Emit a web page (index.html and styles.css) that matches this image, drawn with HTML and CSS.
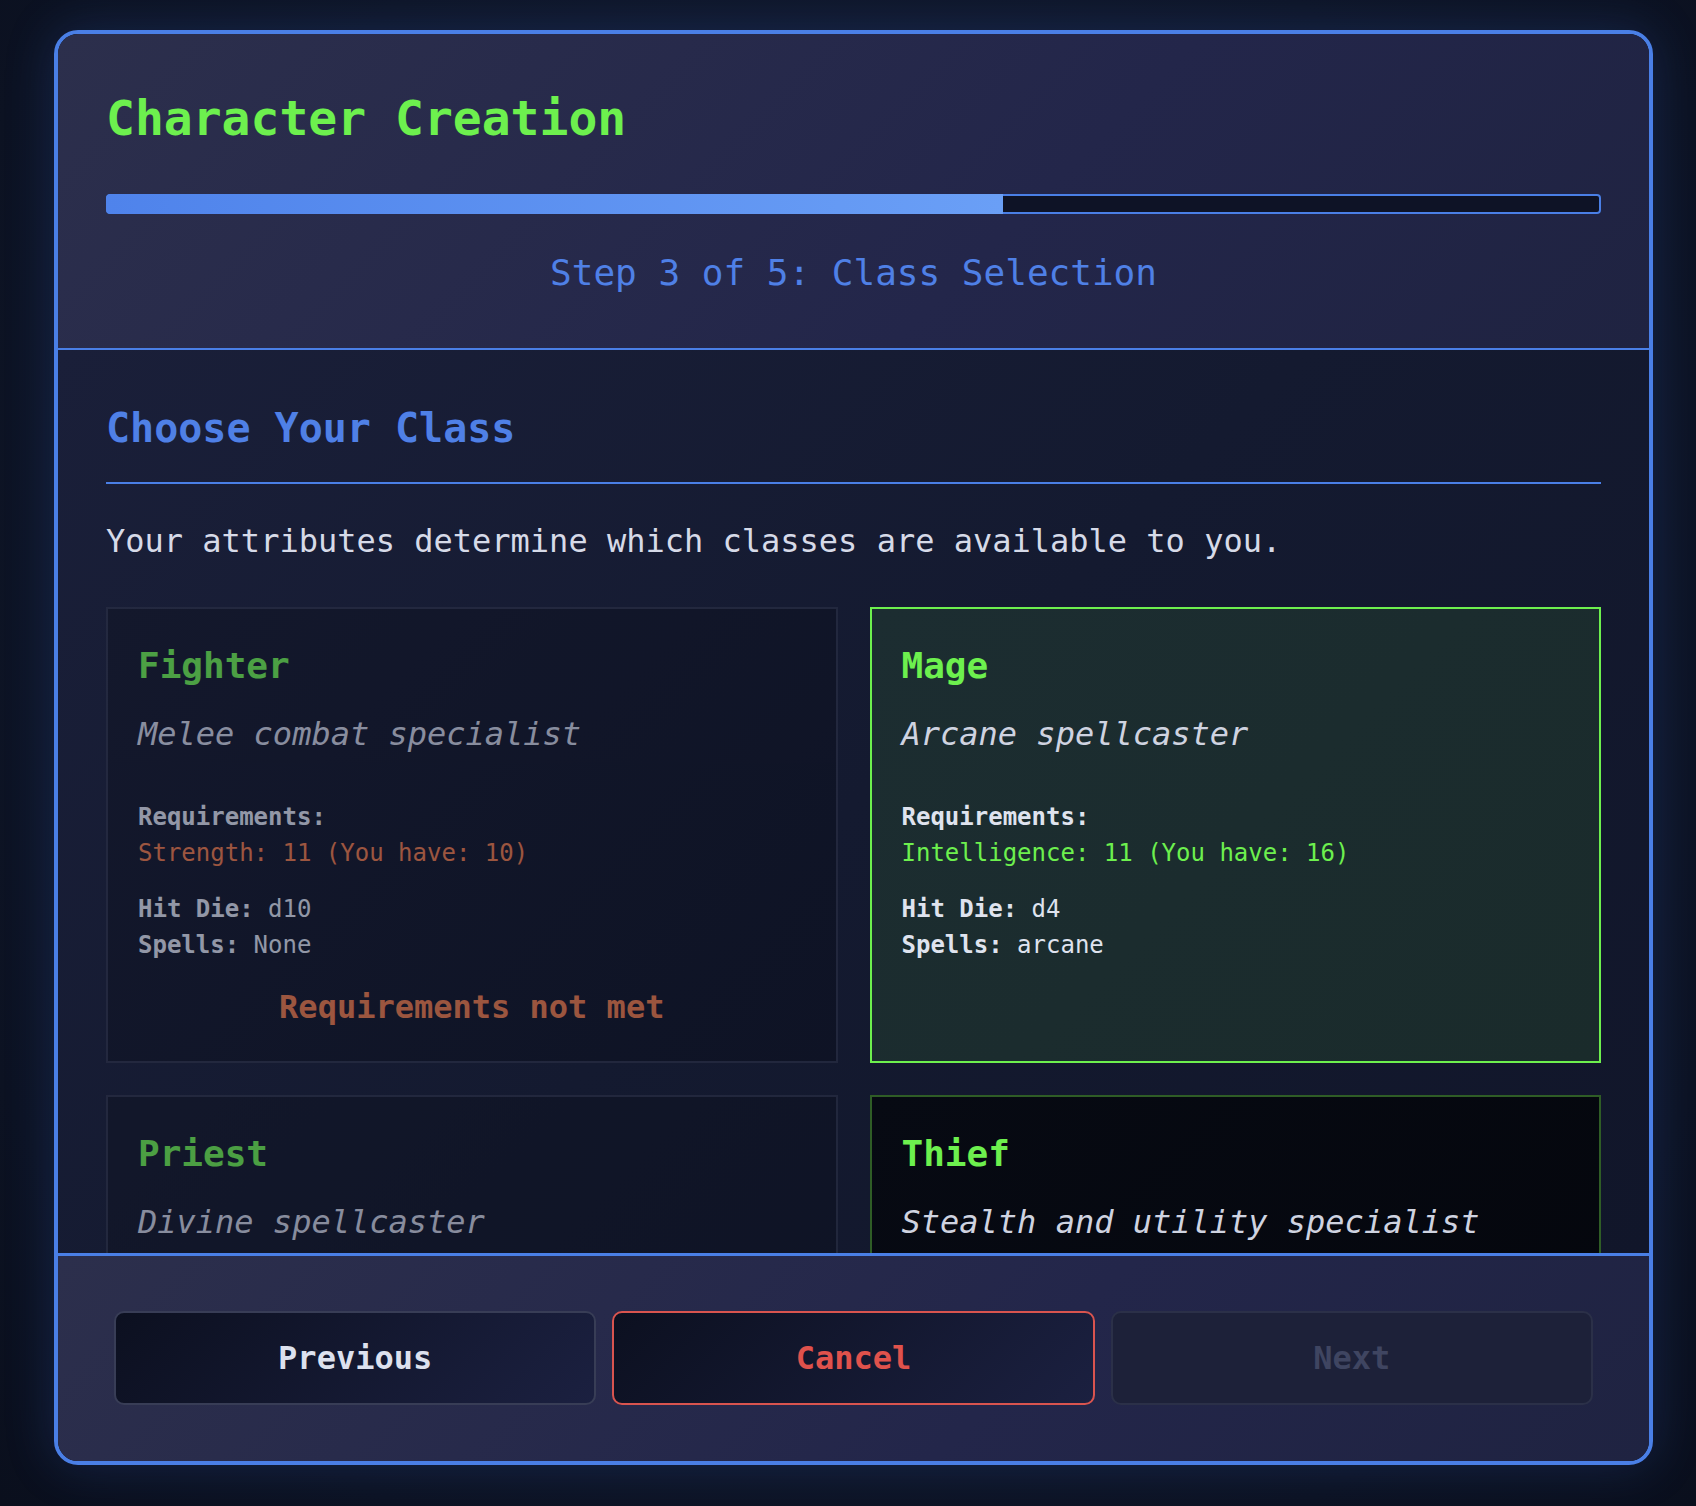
FILE: index.html
```html
<!DOCTYPE html>
<html lang="en">
<head>
<meta charset="utf-8">
<title>Character Creation</title>
<link rel="stylesheet" href="styles.css">
</head>
<body>
<div class="page">
  <div class="modal">
    <header class="modal-header">
      <h1 class="title">Character Creation</h1>
      <div class="progress"><div class="progress-fill" style="width:60%"></div></div>
      <p class="step">Step 3 of 5: Class Selection</p>
    </header>
    <main class="modal-body">
      <h2 class="section-title">Choose Your Class</h2>
      <p class="intro">Your attributes determine which classes are available to you.</p>
      <div class="class-grid">
        <div class="class-card unavailable">
          <h3 class="class-name">Fighter</h3>
          <p class="class-desc">Melee combat specialist</p>
          <div class="req-label">Requirements:</div>
          <div class="req-value fail">Strength: 11 (You have: 10)</div>
          <div class="stat"><b>Hit Die:</b> d10</div>
          <div class="stat"><b>Spells:</b> None</div>
          <div class="not-met">Requirements not met</div>
        </div>
        <div class="class-card selected">
          <h3 class="class-name">Mage</h3>
          <p class="class-desc">Arcane spellcaster</p>
          <div class="req-label">Requirements:</div>
          <div class="req-value ok">Intelligence: 11 (You have: 16)</div>
          <div class="stat"><b>Hit Die:</b> d4</div>
          <div class="stat"><b>Spells:</b> arcane</div>
        </div>
        <div class="class-card unavailable">
          <h3 class="class-name">Priest</h3>
          <p class="class-desc">Divine spellcaster</p>
          <div class="req-label">Requirements:</div>
          <div class="req-value fail">Wisdom: 11 (You have: 9)</div>
          <div class="stat"><b>Hit Die:</b> d8</div>
          <div class="stat"><b>Spells:</b> divine</div>
          <div class="not-met">Requirements not met</div>
        </div>
        <div class="class-card available">
          <h3 class="class-name">Thief</h3>
          <p class="class-desc">Stealth and utility specialist</p>
          <div class="req-label">Requirements:</div>
          <div class="req-value ok">Dexterity: 11 (You have: 14)</div>
          <div class="stat"><b>Hit Die:</b> d6</div>
          <div class="stat"><b>Spells:</b> None</div>
        </div>
      </div>
    </main>
    <footer class="modal-footer">
      <button class="btn btn-prev">Previous</button>
      <button class="btn btn-cancel">Cancel</button>
      <button class="btn btn-next" disabled>Next</button>
    </footer>
  </div>
</div>
</body>
</html>
```

FILE: styles.css
```css
html, body {
  margin: 0;
  padding: 0;
}

body {
  min-height: 1506px;
  background: radial-gradient(ellipse at 50% 40%, #131c34 0%, #0e1527 60%, #0a0f1d 100%);
  font-family: "DejaVu Sans Mono", "Liberation Mono", monospace;
  color: #d6dae8;
}

.page {
  padding: 30px 43px 41px 54px;
}

.modal {
  width: 1599px;
  height: 1435px;
  box-sizing: border-box;
  border: 4px solid #4a7fe6;
  border-radius: 24px;
  overflow: hidden;
  display: flex;
  flex-direction: column;
  box-shadow: 0 0 50px rgba(60, 110, 220, 0.22);
}

.modal-header {
  padding: 48px;
  background: linear-gradient(135deg, #2c2f4c 0%, #23264a 60%, #1f2341 100%);
  border-bottom: 2px solid #4a7fe6;
}

.title {
  margin: 0 0 40px;
  font-size: 48px;
  line-height: 72px;
  font-weight: bold;
  color: #6df04e;
}

.progress {
  height: 20px;
  border-radius: 4px;
  background: #0e1326;
  box-shadow: inset 0 0 0 2px #4a7fe6;
  overflow: hidden;
}

.progress-fill {
  height: 100%;
  border-radius: 4px 0 0 4px;
  background: linear-gradient(90deg, #4f83eb 0%, #6a9ff6 100%);
}

.step {
  margin: 32px 0 0;
  font-size: 36px;
  line-height: 54px;
  text-align: center;
  color: #4f80e6;
}

.modal-body {
  flex: 1;
  overflow: hidden;
  padding: 48px 48px 0;
  background: linear-gradient(135deg, #1a1f39 0%, #141a30 50%, #11162a 100%);
}

.section-title {
  margin: 0;
  padding-bottom: 24px;
  border-bottom: 2px solid #4a7fe6;
  font-size: 40px;
  line-height: 60px;
  font-weight: bold;
  color: #4f80e6;
}

.intro {
  margin: 33px 0 42px;
  font-size: 32px;
  line-height: 48px;
  color: #d6dae8;
}

.class-grid {
  display: grid;
  grid-template-columns: 1fr 1fr;
  gap: 32px;
}

.class-card {
  border: 2px solid #2b3046;
  padding: 30px;
  background: linear-gradient(135deg, #111526 0%, #0c1020 100%);
}

.class-card.unavailable {
  opacity: 0.62;
}

.class-card.selected {
  border-color: #6df04e;
  background: linear-gradient(135deg, #1c2d31 0%, #1a2b2b 100%);
}

.class-card.available {
  border-color: #2f5d26;
  background: linear-gradient(135deg, #070a13 0%, #04060c 100%);
}

.class-name {
  margin: 0 0 17px;
  font-size: 36px;
  line-height: 54px;
  font-weight: bold;
  color: #6df04e;
}

.class-desc {
  margin: 0 0 41px;
  font-size: 32px;
  line-height: 48px;
  font-style: italic;
  color: #cfd3e0;
}

.req-label {
  font-size: 24px;
  line-height: 36px;
  font-weight: bold;
  color: #dfe3ee;
}

.req-value {
  font-size: 24px;
  line-height: 36px;
  margin-bottom: 20px;
}

.req-value.ok {
  color: #6df04e;
}

.req-value.fail {
  color: #ee7a48;
}

.stat {
  font-size: 24px;
  line-height: 36px;
  color: #dfe3ee;
}

.stat b {
  font-weight: bold;
}

.not-met {
  margin-top: 20px;
  text-align: center;
  font-size: 32px;
  line-height: 48px;
  font-weight: bold;
  color: #ee7a48;
}

.modal-footer {
  display: flex;
  padding: 47px 48px 48px;
  border-top: 3px solid #4a7fe6;
  background: linear-gradient(135deg, #2c2f4c 0%, #23264a 60%, #1f2341 100%);
}

.btn {
  flex: 1;
  margin: 8px;
  padding: 21px 20px;
  border: 2px solid #383d56;
  border-radius: 10px;
  background: linear-gradient(135deg, #0c1020 0%, #1b2040 100%);
  font-family: "DejaVu Sans Mono", "Liberation Mono", monospace;
  font-size: 32px;
  line-height: 48px;
  font-weight: bold;
  color: #dde1ee;
}

.btn-cancel {
  border-color: #d9544f;
  color: #e0524c;
}

.btn-next {
  border-color: #2b3048;
  background: #1d2139;
  color: #3f4561;
}
```
